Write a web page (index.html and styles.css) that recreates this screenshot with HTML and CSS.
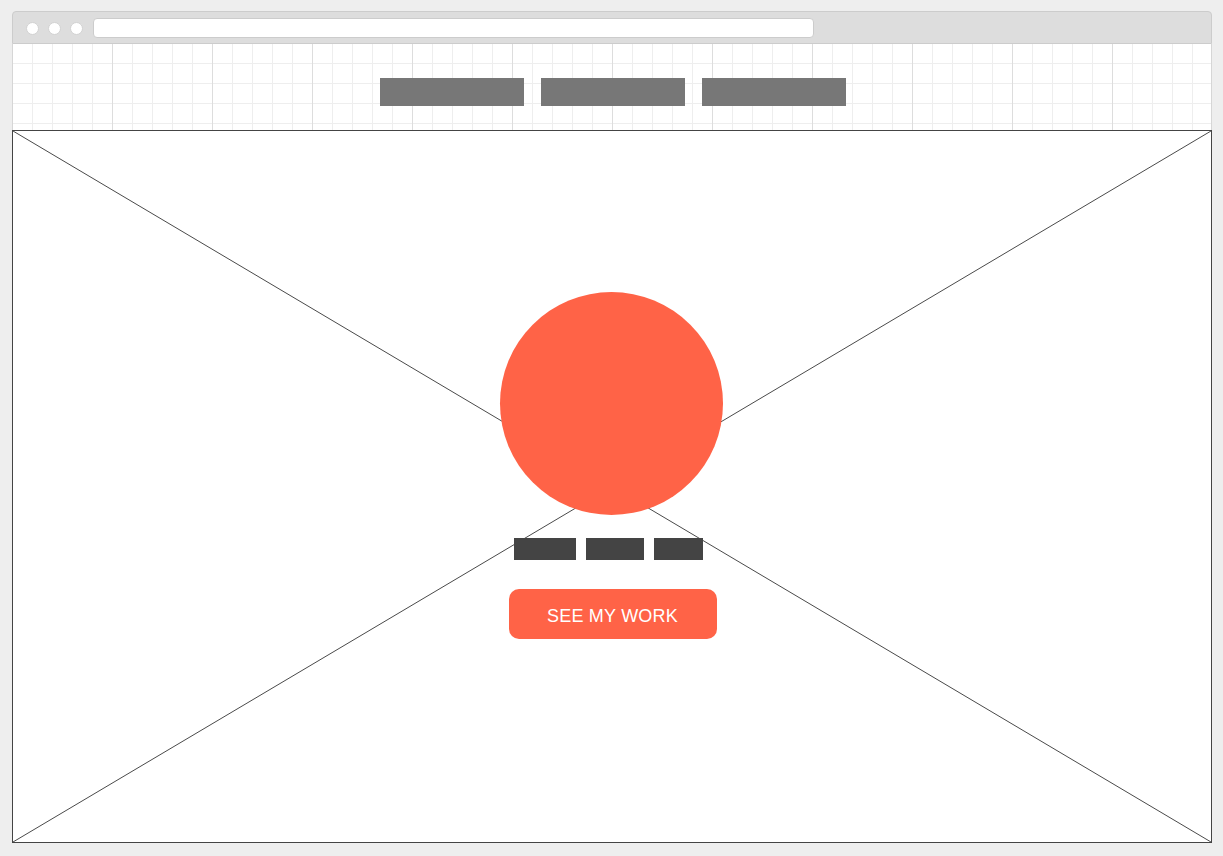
FILE: index.html
```html
<!DOCTYPE html>
<html lang="en">

<head>
    <meta charset="UTF-8">
    <title>Portfolio Wireframe</title>
    <link rel="stylesheet" href="styles.css">
</head>

<body>

    <div class="window">
        <div class="titlebar">
            <span class="dot"></span>
            <span class="dot"></span>
            <span class="dot"></span>
            <div class="address"></div>
        </div>

        <header class="header">
            <nav class="nav">
                <span class="nav-item"></span>
                <span class="nav-item"></span>
                <span class="nav-item"></span>
            </nav>
        </header>

        <section class="hero">
            <svg class="cross" viewBox="0 0 100 100" preserveAspectRatio="none">
                <line x1="0" y1="0" x2="100" y2="100" />
                <line x1="0" y1="100" x2="100" y2="0" />
            </svg>

            <div class="hero-content">
                <div class="avatar"></div>
                <div class="tags">
                    <span class="tag tag-1"></span>
                    <span class="tag tag-2"></span>
                    <span class="tag tag-3"></span>
                </div>
                <a class="btn" href="#">SEE MY WORK</a>
            </div>
        </section>
    </div>

</body>

</html>
```

FILE: styles.css
```css
* {
    box-sizing: border-box;
}

body {
    margin: 0;
    background-color: #eeeeee;
    font-family: 'Liberation Sans', Arial, sans-serif;
}

.window {
    width: 1200px;
    margin: 11px 0 0 12px;
}

/* barra do navegador */
.titlebar {
    height: 33px;
    display: flex;
    align-items: center;
    padding: 1px 0 0 13px;
    background-color: #dddddd;
    border: 1px solid #cccccc;
    border-radius: 4px 4px 0 0;
}

.dot {
    width: 13px;
    height: 13px;
    margin-right: 9px;
    border-radius: 50%;
    background-color: #fff;
    border: 1px solid #d2d2d2;
}

.address {
    width: 721px;
    height: 20px;
    margin-left: 1px;
    background-color: #fff;
    border: 1px solid #cccccc;
    border-radius: 4px;
}

/* cabeçalho com grade */
.header {
    height: 86px;
    padding-top: 34px;
    border-left: 1px solid #d6d6d6;
    border-right: 1px solid #d6d6d6;
    background-color: #fff;
    background-image:
        linear-gradient(to right, #dddddd 1px, transparent 1px),
        linear-gradient(to right, #eeeeee 1px, transparent 1px),
        linear-gradient(to bottom, #eeeeee 1px, transparent 1px);
    background-size: 100px 100px, 20px 20px, 20px 20px;
    background-origin: border-box;
    background-position: 0 -1px;
}

.nav {
    display: flex;
    justify-content: center;
    gap: 17px;
    padding-left: 1px;
}

.nav-item {
    width: 144px;
    height: 28px;
    background-color: #777777;
}

/* hero */
.hero {
    position: relative;
    height: 713px;
    background-color: #fff;
    border: 1px solid #444444;
}

.cross {
    position: absolute;
    top: 0;
    left: 0;
    width: 100%;
    height: 100%;
}

.cross line {
    stroke: #4a4a4a;
    stroke-width: 1;
    vector-effect: non-scaling-stroke;
}

.hero-content {
    position: relative;
    display: flex;
    flex-direction: column;
    align-items: center;
    padding-top: 161px;
}

.avatar {
    width: 223px;
    height: 223px;
    margin-right: 2px;
    border-radius: 50%;
    background-color: #ff6347;
}

.tags {
    display: flex;
    gap: 10px;
    margin-top: 23px;
    margin-right: 8px;
}

.tag {
    height: 22px;
    background-color: #444444;
}

.tag-1 {
    width: 62px;
}

.tag-2 {
    width: 58px;
}

.tag-3 {
    width: 49px;
}

.btn {
    display: flex;
    align-items: center;
    justify-content: center;
    width: 208px;
    height: 50px;
    margin-top: 29px;
    margin-left: 1px;
    padding-top: 4px;
    border-radius: 10px;
    background-color: #ff6347;
    color: #fff;
    font-size: 18px;
    letter-spacing: 0.2px;
    text-decoration: none;
}
```
